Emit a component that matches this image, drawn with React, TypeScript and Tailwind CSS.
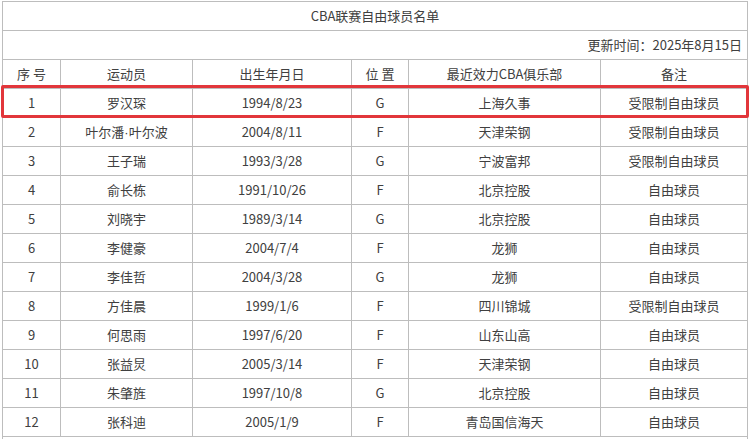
import React from "react";

interface Player {
  no: number;
  name: string;
  birth: string;
  pos: string;
  club: string;
  note: string;
}

const players: Player[] = [
  { no: 1, name: "罗汉琛", birth: "1994/8/23", pos: "G", club: "上海久事", note: "受限制自由球员" },
  { no: 2, name: "叶尔潘·叶尔波", birth: "2004/8/11", pos: "F", club: "天津荣钢", note: "受限制自由球员" },
  { no: 3, name: "王子瑞", birth: "1993/3/28", pos: "G", club: "宁波富邦", note: "受限制自由球员" },
  { no: 4, name: "俞长栋", birth: "1991/10/26", pos: "F", club: "北京控股", note: "自由球员" },
  { no: 5, name: "刘晓宇", birth: "1989/3/14", pos: "G", club: "北京控股", note: "自由球员" },
  { no: 6, name: "李健豪", birth: "2004/7/4", pos: "F", club: "龙狮", note: "自由球员" },
  { no: 7, name: "李佳哲", birth: "2004/3/28", pos: "G", club: "龙狮", note: "自由球员" },
  { no: 8, name: "方佳晨", birth: "1999/1/6", pos: "F", club: "四川锦城", note: "受限制自由球员" },
  { no: 9, name: "何思雨", birth: "1997/6/20", pos: "F", club: "山东山高", note: "自由球员" },
  { no: 10, name: "张益炅", birth: "2005/3/14", pos: "F", club: "天津荣钢", note: "自由球员" },
  { no: 11, name: "朱肇旌", birth: "1997/10/8", pos: "G", club: "北京控股", note: "自由球员" },
  { no: 12, name: "张科迪", birth: "2005/1/9", pos: "F", club: "青岛国信海天", note: "自由球员" },
];

const cell = "border border-[#bdbdbd] h-[29px] p-0 text-center align-middle";

// the CJK font draws "·" full width; the reference has a narrow dot
function Name({ text }: { text: string }) {
  const parts = text.split("·");
  if (parts.length === 1) return <>{text}</>;
  return (
    <>
      {parts[0]}
      <span style={{ fontFamily: '"Liberation Sans", sans-serif' }}>·</span>
      {parts[1]}
    </>
  );
}

export default function App() {
  return (
    <div
      className="w-[750px] h-[439px] overflow-hidden bg-white text-[13px] text-[#404040]"
      style={{ fontFamily: '"Noto Sans CJK SC", "Noto Sans", sans-serif' }}
    >
      <div className="relative pt-[1px] pl-[2px]">
        <table className="table-fixed border-collapse w-[745px]">
          <colgroup>
            <col className="w-[58px]" />
            <col className="w-[132px]" />
            <col className="w-[159px]" />
            <col className="w-[57px]" />
            <col className="w-[192px]" />
            <col className="w-[147px]" />
          </colgroup>
          <tbody>
            <tr>
              <td colSpan={6} className={cell}>CBA联赛自由球员名单</td>
            </tr>
            <tr>
              <td colSpan={6} className={`${cell} text-right pr-[5px]`}>更新时间：2025年8月15日</td>
            </tr>
            <tr>
              <td className={cell}>序 号</td>
              <td className={cell}>运动员</td>
              <td className={cell}>出生年月日</td>
              <td className={cell}>位 置</td>
              <td className={cell}>最近效力CBA俱乐部</td>
              <td className={cell}>备注</td>
            </tr>
            {players.map((p) => (
              <tr key={p.no}>
                <td className={cell}>{p.no}</td>
                <td className={cell}><Name text={p.name} /></td>
                <td className={cell}>{p.birth}</td>
                <td className={cell}>{p.pos}</td>
                <td className={cell}>{p.club}</td>
                <td className={cell}>{p.note}</td>
              </tr>
            ))}
            <tr>
              <td colSpan={6} className={cell}></td>
            </tr>
          </tbody>
        </table>
        {/* highlight around row 1 */}
        <div className="absolute left-[1px] top-[85px] w-[748px] h-[33px] border-[3px] border-[#e2363b] rounded-[2px]" />
      </div>
    </div>
  );
}
